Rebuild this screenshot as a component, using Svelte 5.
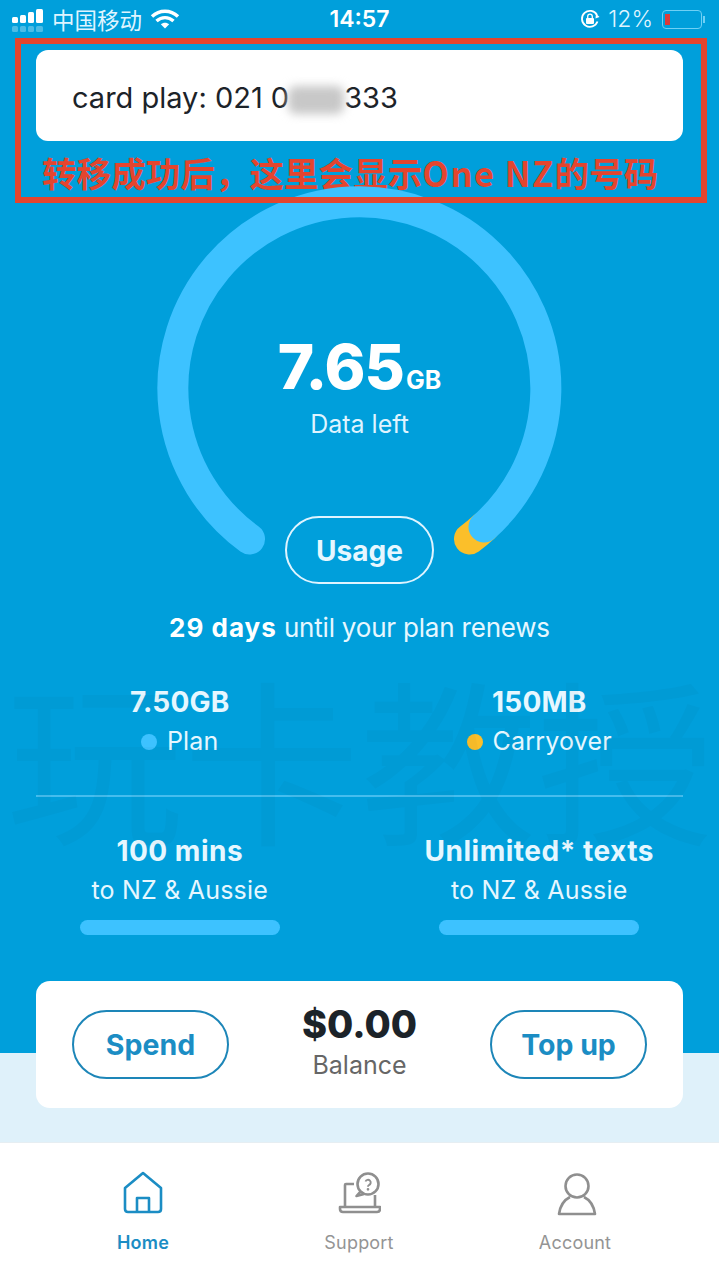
<script>
  const stats = [
    { value: '7.50GB', label: 'Plan', dot: 'dotPlan' },
    { value: '150MB', label: 'Carryover', dot: 'dotCarry' }
  ]
  const allowances = [
    { value: '100 mins', label: 'to NZ & Aussie' },
    { value: 'Unlimited* texts', label: 'to NZ & Aussie' }
  ]
</script>

<div class="page">
  <header class="status">
    <div class="statusLeft">
      <svg width="34" height="26" viewBox="0 0 34 26">
        <g fill="#fff">
          <rect x="1" y="11" width="6" height="6" rx="1.500" />
          <rect x="9" y="9" width="6" height="8" rx="1.500" />
          <rect x="17" y="6" width="6" height="11" rx="1.500" />
          <rect x="25" y="3" width="7" height="14" rx="1.500" />
        </g>
        <g fill="#fff" opacity="0.3">
          <rect x="1" y="20" width="6" height="6" rx="1.500" />
          <rect x="9" y="20" width="6" height="6" rx="1.500" />
          <rect x="17" y="20" width="6" height="6" rx="1.500" />
          <rect x="25" y="20" width="7" height="6" rx="1.500" />
        </g>
      </svg>
      <span class="carrier">中国移动</span>
      <svg width="30" height="22" viewBox="0 0 30 22" fill="none" stroke="#fff" stroke-width="3.400">
        <path d="M2 8.500C9.500 1.500 20.500 1.500 28 8.500" />
        <path d="M6.500 13C11.500 8.500 18.500 8.500 23.500 13" />
        <path d="M15 20.500L10.800 16.300C13 14.200 17 14.200 19.200 16.300Z" fill="#fff" stroke="none" />
      </svg>
    </div>
    <div class="time">14:57</div>
    <div class="statusRight">
      <svg width="20" height="20" viewBox="0 0 20 20" fill="none">
        <path d="M17.500 12.500A8 8 0 1 1 17 6" stroke="#fff" stroke-width="1.800" />
        <path d="M19.500 8L15.500 9.500L16 4.500Z" fill="#fff" />
        <rect x="6" y="9" width="8" height="6" rx="1" fill="#fff" />
        <path d="M7.700 9V7.500a2.300 2.300 0 0 1 4.600 0V9" stroke="#fff" stroke-width="1.300" />
      </svg>
      <span class="percent">12%</span>
      <div class="battery">
        <div class="batteryLevel"></div>
      </div>
      <div class="batteryCap"></div>
    </div>
  </header>

  <section class="accountCard">
    <span class="accountText">card play: 021 0<span class="blurred"></span>333</span>
  </section>
  <p class="note">转移成功后，这里会显示<span class="noteLatin">One NZ</span>的号码</p>

  <section class="gauge">
    <svg width="719" height="398" viewBox="0 0 719 398" fill="none" stroke-width="31" stroke-linecap="round">
      <path d="M469.500 353A186.500 186.500 0 0 0 484 341" stroke="#fbbf2a" />
      <path d="M249.500 353A186.500 186.500 0 1 1 484 341" stroke="#3dc2ff" />
    </svg>
    <div class="gaugeCenter">
      <div class="gaugeValue">7.65<span class="gaugeUnit">GB</span></div>
      <div class="gaugeLabel">Data left</div>
    </div>
    <div class="usageBtn">Usage</div>
  </section>

  <p class="renews"><strong>29 days</strong> until your plan renews</p>

  <section class="columns stats">
    {#each stats as stat}
      <div class="column">
        <div class="statValue">{stat.value}</div>
        <div class="statLabel"><span class="dot {stat.dot}"></span>{stat.label}</div>
      </div>
    {/each}
  </section>

  <div class="divider"></div>

  <section class="columns allowances">
    {#each allowances as item}
      <div class="column">
        <div class="statValue wide">{item.value}</div>
        <div class="statLabel">{item.label}</div>
        <div class="bar"></div>
      </div>
    {/each}
  </section>

  <section class="balanceCard">
    <div class="pill">Spend</div>
    <div class="balance">
      <div class="balanceValue">$0.00</div>
      <div class="balanceLabel">Balance</div>
    </div>
    <div class="pill">Top up</div>
  </section>

  <nav class="nav">
    <div class="navItem active">
      <svg width="44" height="48" viewBox="0 0 44 48" fill="none" stroke="#1b8dc4" stroke-width="2.600" stroke-linejoin="round">
        <path d="M22 4L40 19V40Q40 43 37 43H7Q4 43 4 40V19Z" />
        <path d="M16 43V29H28V43" />
      </svg>
      <span>Home</span>
    </div>
    <div class="navItem">
      <svg width="44" height="48" viewBox="0 0 44 48" fill="none" stroke="#8f8f8f" stroke-width="2.600" stroke-linejoin="round">
        <circle cx="31" cy="15" r="10.500" />
        <path d="M23.500 22.500L19.500 27L27 25" />
        <path d="M17 15H9Q8 15 8 16V37M38 26V37" />
        <path d="M3 38H43V40Q43 43 40 43H6Q3 43 3 40Z" />
        <path d="M28.500 12.500a2.700 2.700 0 1 1 3.500 3.500q-1 .5 -1 1.800" stroke-width="1.900" />
        <circle cx="31" cy="20.300" r="0.700" stroke-width="1.300" />
      </svg>
      <span>Support</span>
    </div>
    <div class="navItem">
      <svg width="44" height="48" viewBox="0 0 44 48" fill="none" stroke="#8f8f8f" stroke-width="2.600" stroke-linejoin="round">
        <circle cx="24" cy="17" r="11.500" />
        <path d="M17 28C11 31 7 38 6 45H42C41 38 37 31 31 28" />
      </svg>
      <span>Account</span>
    </div>
  </nav>

  <div class="watermark">玩卡教授</div>
  <div class="highlight"></div>
</div>

<style>
  :global(body) {
    margin: 0;
  }

  .page {
    position: relative;
    width: 719px;
    height: 1280px;
    overflow: hidden;
    background: linear-gradient(#009fdb 1053px, #dff1fa 1053px);
    font-family: Inter, 'Noto Sans CJK SC', sans-serif;
    color: #e6f7ff;
  }

  .status {
    display: flex;
    justify-content: space-between;
    align-items: center;
    height: 38px;
    padding: 0 14px 0 11px;
    position: relative;
    color: #fff;
  }

  .statusLeft {
    display: flex;
    align-items: center;
    gap: 7px;
  }

  .carrier {
    font-family: 'Noto Sans CJK SC', sans-serif;
    font-size: 22.500px;
    margin-right: 1px;
    color: #dff4ff;
  }

  .time {
    position: absolute;
    left: 0;
    right: 0;
    text-align: center;
    font-size: 23px;
    font-weight: 600;
  }

  .statusRight {
    display: flex;
    align-items: center;
    font-size: 23px;
    font-weight: 300;
  }

  .percent {
    margin: 0 9px 0 8px;
    color: #dff4ff;
  }

  .battery {
    width: 40px;
    height: 19px;
    border: 1px solid #6fd0f5;
    border-radius: 4px;
    padding: 3px 2px;
    box-sizing: border-box;
  }

  .batteryLevel {
    width: 5px;
    height: 100%;
    background: #dc3a3a;
  }

  .batteryCap {
    width: 2px;
    height: 7px;
    margin-left: 1px;
    background: #6fd0f5;
  }

  .accountCard {
    margin: 12px 36px 0;
    height: 91px;
    padding: 3px 0 0 36px;
    box-sizing: border-box;
    display: flex;
    align-items: center;
    background: #fff;
    border-radius: 12px;
    color: #1c2329;
    font-size: 29px;
    white-space: pre;
  }

  .blurred {
    display: inline-block;
    vertical-align: -6px;
    width: 56px;
    height: 28px;
    margin: 0 0 0 -1px;
    background: #c8c8c8;
    border-radius: 8px;
    filter: blur(5px);
  }

  .note {
    margin: 0;
    height: 62px;
    line-height: 62px;
    padding-left: 42px;
    color: #e4452e;
    font-size: 34.600px;
    font-weight: 700;
    font-family: 'Noto Sans CJK SC', sans-serif;
    white-space: nowrap;
  }

  .noteLatin {
    letter-spacing: 1.400px;
  }

  .gauge {
    position: relative;
    height: 398px;
    margin-top: -17px;
  }

  .gauge svg {
    display: block;
  }

  .gaugeCenter {
    position: absolute;
    top: 143px;
    left: 0;
    right: 0;
    text-align: center;
    color: #fff;
  }

  .gaugeValue {
    font-size: 62px;
    font-weight: 800;
    line-height: 76px;
    letter-spacing: -1px;
  }

  .gaugeUnit {
    font-size: 25px;
    font-weight: 700;
    line-height: 1;
    letter-spacing: 0;
    margin-left: 2px;
  }

  .gaugeLabel {
    margin-top: 3px;
    font-size: 25px;
    line-height: 32px;
    color: #dff4ff;
  }

  .usageBtn {
    position: absolute;
    top: 330px;
    left: 285px;
    width: 149px;
    height: 68px;
    box-sizing: border-box;
    padding-top: 2px;
    border: 2.500px solid #dff4ff;
    border-radius: 34px;
    display: flex;
    align-items: center;
    justify-content: center;
    font-size: 28px;
    font-weight: 700;
    background: #009fdb;
  }

  .renews {
    margin: 29px 0 0;
    text-align: center;
    font-size: 26px;
    line-height: 30px;
    letter-spacing: -0.200px;
  }

  .renews strong {
    color: #fff;
    font-weight: 700;
    letter-spacing: 1px;
  }

  .columns {
    display: grid;
    grid-template-columns: 1fr 1fr;
    text-align: center;
  }

  .stats {
    margin-top: 43px;
  }

  .statValue {
    font-size: 28px;
    font-weight: 700;
    line-height: 32px;
    letter-spacing: 0.200px;
  }

  .wide {
    letter-spacing: 0.500px;
  }

  .statLabel {
    margin-top: 7px;
    font-size: 25px;
    line-height: 32px;
    letter-spacing: 0.200px;
  }

  .dot {
    display: inline-block;
    width: 16px;
    height: 16px;
    margin-right: 10px;
    border-radius: 50%;
  }

  .dotPlan {
    background: #3dc2ff;
  }

  .dotCarry {
    background: #fbbf2a;
  }

  .divider {
    height: 2px;
    margin: 38px 36px 0;
    background: #45bdee;
  }

  .allowances {
    margin-top: 38px;
  }

  .bar {
    width: 200px;
    height: 15px;
    margin: 14px auto 0;
    border-radius: 8px;
    background: #3dc2ff;
  }

  .balanceCard {
    margin: 46px 36px 0;
    height: 127px;
    padding: 0 36px;
    display: flex;
    justify-content: space-between;
    align-items: center;
    background: #fff;
    border-radius: 14px;
  }

  .pill {
    width: 157px;
    height: 69px;
    box-sizing: border-box;
    border: 2px solid #1d86b8;
    border-radius: 35px;
    display: flex;
    align-items: center;
    justify-content: center;
    color: #1b8dc4;
    font-size: 28.500px;
    font-weight: 700;
  }

  .balance {
    margin-bottom: 6px;
    text-align: center;
  }

  .balanceValue {
    font-size: 38px;
    font-weight: 800;
    line-height: 44px;
    color: #1c2329;
  }

  .balanceLabel {
    margin-top: 3px;
    font-size: 25px;
    line-height: 32px;
    color: #666;
  }

  .nav {
    position: absolute;
    left: 0;
    right: 0;
    bottom: 0;
    height: 137px;
    padding: 0 35px;
    display: flex;
    background: #fff;
    border-top: 1px solid #e6eef2;
  }

  .navItem {
    width: 216px;
    padding-top: 26px;
    display: flex;
    flex-direction: column;
    align-items: center;
    font-size: 18px;
    letter-spacing: 0.200px;
    color: #949494;
  }

  .navItem span {
    margin-top: 15px;
  }

  .active {
    color: #1b8dc4;
    font-weight: 600;
  }

  .watermark {
    position: absolute;
    top: 650px;
    left: 6px;
    font-family: 'Noto Sans CJK SC', sans-serif;
    font-size: 177px;
    line-height: 210px;
    color: rgba(0, 0, 0, 0.025);
    white-space: nowrap;
    pointer-events: none;
  }

  .highlight {
    position: absolute;
    top: 38px;
    left: 15px;
    width: 692px;
    height: 165px;
    box-sizing: border-box;
    border: 6px solid #e4452e;
    pointer-events: none;
  }
</style>
